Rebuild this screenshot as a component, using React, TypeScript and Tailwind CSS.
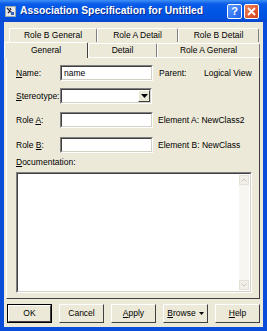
import React from 'react';

const sunkenOuter =
  'border border-t-[#808080] border-l-[#808080] border-b-white border-r-white';
const sunkenInner =
  'h-full border border-t-[#404040] border-l-[#404040] border-b-[#d4d0c8] border-r-[#d4d0c8] bg-white';

const Field: React.FC<{ value?: string }> = ({ value }) => (
  <div className={`h-[16px] w-[93px] ${sunkenOuter}`}>
    <div className={`${sunkenInner} flex items-center pl-[2px] leading-none`}>{value}</div>
  </div>
);

const Combo: React.FC = () => (
  <div className={`h-[16px] w-[92px] ${sunkenOuter}`}>
    <div className={`${sunkenInner} flex justify-end`}>
      <div className="w-[12px] h-full bg-[#ece9d8] border border-t-white border-l-white border-b-[#404040] border-r-[#404040] flex items-center justify-center">
        <svg width="7" height="4" viewBox="0 0 7 4">
          <path d="M0 0h7L3.5 4z" fill="#000" />
        </svg>
      </div>
    </div>
  </div>
);

const Label: React.FC<{ pre?: string; u: string; post?: string }> = ({ pre, u, post }) => (
  <span className="whitespace-pre">
    {pre}
    <span className="underline underline-offset-1">{u}</span>
    {post}
  </span>
);

const Tab: React.FC<{ w: string; label: string; active?: boolean }> = ({ w, label, active }) => (
  <div
    className={
      active
        ? `${w} h-[16px] -mb-[1px] relative z-10 bg-[#ece9d8] border-t border-l border-white border-r border-r-[#404040] rounded-t-[2px] flex items-center justify-center`
        : `${w} h-[14px] bg-[#ece9d8] border-t border-l border-white border-r border-r-[#808080] rounded-t-[2px] flex items-center justify-center`
    }
  >
    {label}
  </div>
);

const Button: React.FC<{ children: React.ReactNode; def?: boolean }> = ({ children, def }) => (
  <div className={def ? 'w-[45px] h-[19px] border border-black' : 'w-[45px] h-[19px]'}>
    <div className="h-full border border-t-white border-l-white border-b-[#404040] border-r-[#404040] bg-[#ece9d8] flex items-center justify-center">
      {children}
    </div>
  </div>
);

export default function App() {
  return (
    <div className="w-[267px] h-[331px] bg-[#0a4ddb] flex flex-col font-['Liberation_Sans',Arial,sans-serif] text-[8.5px] text-black select-none">
      {/* title bar */}
      <div className="h-[22px] flex items-center pl-[5px] pr-[8px] bg-[linear-gradient(to_bottom,#3f8ff7,#0a5ce8_18%,#0055e5_55%,#0050df_85%,#0a45cc)]">
        <div className="w-[11px] h-[11px] bg-[#e8e8e8] border border-[#9aa] flex items-center justify-center">
          <svg width="9" height="9" viewBox="0 0 9 9">
            <path d="M1 1l3 3M4 1l1 2M2 6l2-2 3 3" stroke="#223" strokeWidth="1.2" fill="none" />
            <rect x="5" y="5" width="3" height="3" fill="#3060c0" />
          </svg>
        </div>
        <div className="ml-[4px] text-white font-bold text-[10.3px] leading-none [text-shadow:1px_1px_0_#0a2a8a]">
          Association Specification for Untitled
        </div>
        <div className="ml-auto flex gap-[2px]">
          <div className="w-[15px] h-[15px] rounded-[2px] border border-white bg-[linear-gradient(135deg,#5a9cff,#1f5ee8)] flex items-center justify-center text-white font-bold text-[11px] leading-none">
            ?
          </div>
          <div className="w-[15px] h-[15px] rounded-[2px] border border-white bg-[linear-gradient(135deg,#f0825a,#d0401a)] flex items-center justify-center">
            <svg width="9" height="9" viewBox="0 0 9 9">
              <path d="M1 1l7 7M8 1L1 8" stroke="#fff" strokeWidth="1.8" />
            </svg>
          </div>
        </div>
      </div>

      {/* body */}
      <div className="flex-1 mx-[4px] mb-[4px] bg-[#ece9d8] flex flex-col">
        {/* tabs */}
        <div className="pt-[6px] flex flex-col">
          <div className="flex pl-[5px]">
            <Tab w="w-[88px]" label="Role B General" />
            <Tab w="w-[81px]" label="Role A Detail" />
            <Tab w="w-[81px]" label="Role B Detail" />
          </div>
          <div className="flex items-end">
            <Tab w="w-[84px]" label="General" active />
            <Tab w="w-[69px]" label="Detail" />
            <Tab w="w-[103px]" label="Role A General" />
          </div>
        </div>

        {/* panel */}
        <div className="ml-[2px] w-[254px] h-[242px] border border-t-white border-l-white border-b-[#404040] border-r-[#404040] flex flex-col pl-[9px] pt-[7px]">
          <div className="flex items-center h-[16px]">
            <div className="w-[44px]">
              <Label u="N" post="ame:" />
            </div>
            <Field value="name" />
            <div className="ml-[6px] w-[45px]">Parent:</div>
            <div>Logical View</div>
          </div>
          <div className="flex items-center h-[16px] mt-[7px]">
            <div className="w-[44px]">
              <Label u="S" post="tereotype:" />
            </div>
            <Combo />
          </div>
          <div className="flex items-center h-[16px] mt-[8px]">
            <div className="w-[44px]">
              <Label pre="Role " u="A" post=":" />
            </div>
            <Field />
            <div className="ml-[5px]">Element A: NewClass2</div>
          </div>
          <div className="flex items-center h-[16px] mt-[9px]">
            <div className="w-[44px]">
              <Label pre="Role " u="B" post=":" />
            </div>
            <Field />
            <div className="ml-[5px]">Element B: NewClass</div>
          </div>
          <div className="mt-[4px] h-[10px] flex items-center">
            <Label u="D" post="ocumentation:" />
          </div>
          <div className={`mt-[5px] w-[236px] h-[121px] ${sunkenOuter}`}>
            <div className={`${sunkenInner} flex justify-end pr-[1px] py-[1px]`}>
              <div className="w-[10px] h-full bg-[#f7f6f1] flex flex-col justify-between">
                <div className="h-[10px] bg-[#f1efe6] border border-[#e4e2d8] flex items-center justify-center">
                  <svg width="6" height="4" viewBox="0 0 6 4">
                    <path d="M0.5 3.5L3 1l2.5 2.5" stroke="#c8c6bc" fill="none" />
                  </svg>
                </div>
                <div className="h-[10px] bg-[#f1efe6] border border-[#e4e2d8] flex items-center justify-center">
                  <svg width="6" height="4" viewBox="0 0 6 4">
                    <path d="M0.5 0.5L3 3l2.5-2.5" stroke="#c8c6bc" fill="none" />
                  </svg>
                </div>
              </div>
            </div>
          </div>
        </div>

        {/* buttons */}
        <div className="mt-[5px] pl-[3px] flex gap-[7px]">
          <Button def>OK</Button>
          <Button>Cancel</Button>
          <Button>
            <Label u="A" post="pply" />
          </Button>
          <Button>
            <Label u="B" post="rowse" />
            <svg className="ml-[3px]" width="5" height="3" viewBox="0 0 5 3">
              <path d="M0 0h5L2.5 3z" fill="#000" />
            </svg>
          </Button>
          <Button>
            <Label u="H" post="elp" />
          </Button>
        </div>
      </div>
    </div>
  );
}
